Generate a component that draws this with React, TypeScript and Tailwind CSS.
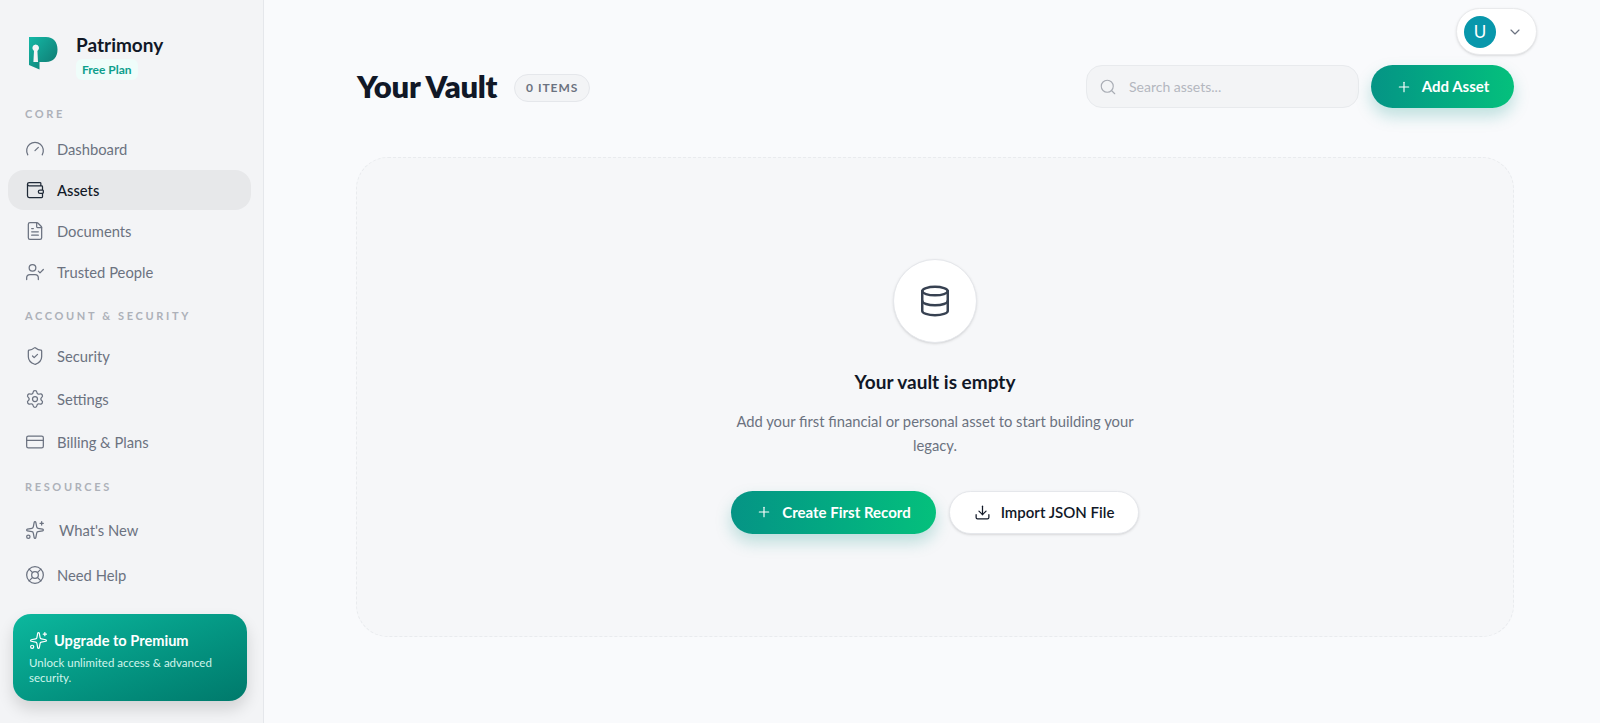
import React from 'react';
import {
  Gauge,
  Wallet,
  FileText,
  UserCheck,
  ShieldCheck,
  Settings,
  CreditCard,
  Sparkles,
  LifeBuoy,
  Plus,
  Search,
  ChevronDown,
  Database,
  Download,
} from 'lucide-react';

const font = { fontFamily: 'Lato, "Noto Sans", sans-serif' };

const Logo = () => (
  <svg width="29" height="33" viewBox="0 0 29 33" fill="none" className="shrink-0">
    <defs>
      <linearGradient id="logoFill" x1="0" y1="0" x2="1" y2="1">
        <stop offset="0%" stopColor="#14b8a6" />
        <stop offset="100%" stopColor="#0f766e" />
      </linearGradient>
    </defs>
    <path
      fillRule="evenodd"
      d="M0 0H17C24.5 0 28.5 5 28.5 12.5C28.5 20 24.5 25 17 25H10.5V32.5L0 28ZM6.7 7.6A3.4 3.4 0 0 0 5 13.9L4.4 25H9L8.4 13.9A3.4 3.4 0 0 0 6.7 7.6Z"
      fill="url(#logoFill)"
    />
  </svg>
);

const NavItem = ({
  icon: Icon,
  label,
  active,
  h,
  gap = 'gap-[12px]',
}: {
  icon: React.ElementType;
  label: string;
  active?: boolean;
  h: string;
  gap?: string;
}) => (
  <div
    className={`flex items-center ${gap} rounded-2xl pl-[17px] text-[14.75px] ${h} ${
      active ? 'bg-[#e7e8ea] text-[#111827] font-medium' : 'text-[#6b7280]'
    }`}
  >
    <Icon size={20} strokeWidth={1.5} className={active ? 'text-[#1f2937]' : 'text-[#6b7280]'} />
    <span>{label}</span>
  </div>
);

const SectionLabel = ({ children, className }: { children: string; className: string }) => (
  <div className={`pl-[25px] text-[11px] font-bold tracking-[0.24em] text-[#adb1b9] leading-4 ${className}`}>{children}</div>
);

const Sidebar = () => (
  <aside className="w-[264px] h-[723px] shrink-0 bg-[#f3f4f6] border-r border-[#e5e7eb] flex flex-col">
    <div className="flex gap-[18px] pl-[29px] pt-[37px]">
      <Logo />
      <div className="flex flex-col items-start">
        <span className="text-[19px] font-bold leading-[20px] text-[#111827] -mt-[2px]">Patrimony</span>
        <span className="mt-[4px] rounded-md bg-[#effdfa] px-[6px] text-[12px] font-bold leading-[21px] text-[#0d9f8c]">Free Plan</span>
      </div>
    </div>

    <SectionLabel className="mt-[26px]">CORE</SectionLabel>
    <nav className="mt-[7px] pl-[8px] pr-[12px] flex flex-col gap-[1px]">
      <NavItem icon={Gauge} label="Dashboard" h="h-[40px]" />
      <NavItem icon={Wallet} label="Assets" active h="h-[40px]" />
      <NavItem icon={FileText} label="Documents" h="h-[40px]" />
      <NavItem icon={UserCheck} label="Trusted People" h="h-[40px]" />
    </nav>

    <SectionLabel className="mt-[16px]">ACCOUNT &amp; SECURITY</SectionLabel>
    <nav className="mt-[11px] pl-[8px] pr-[12px] flex flex-col gap-[1px]">
      <NavItem icon={ShieldCheck} label="Security" h="h-[42px]" />
      <NavItem icon={Settings} label="Settings" h="h-[42px]" />
      <NavItem icon={CreditCard} label="Billing & Plans" h="h-[42px]" />
    </nav>

    <SectionLabel className="mt-[16px]">RESOURCES</SectionLabel>
    <nav className="mt-[13px] pl-[8px] pr-[12px] flex flex-col gap-[1px]">
      <NavItem icon={Sparkles} label="What's New" h="h-[44px]" gap="gap-[14px]" />
      <NavItem icon={LifeBuoy} label="Need Help" h="h-[44px]" />
    </nav>

    <div className="ml-[13px] mr-[16px] mt-[17px] h-[87px] rounded-[18px] bg-gradient-to-br from-[#0cb89e] to-[#00796b] pl-[16px] pr-[12px] pt-[17px] shadow-[0_8px_16px_rgba(0,0,0,0.14)]">
      <div className="flex items-center gap-[6px] text-white">
        <Sparkles size={19} strokeWidth={1.5} />
        <span className="text-[14.6px] font-bold leading-[18px]">Upgrade to Premium</span>
      </div>
      <p className="mt-[6px] text-[11.5px] leading-[14.5px] text-[#d1f5ec]">Unlock unlimited access &amp; advanced security.</p>
    </div>
  </aside>
);

const GreenButton = ({ label, className }: { label: string; className: string }) => (
  <button className={`flex items-center justify-center gap-[10px] rounded-full bg-gradient-to-r from-[#059485] to-[#05c07c] text-[15px] font-bold text-white shadow-[0_8px_16px_rgba(13,148,136,0.25)] ${className}`}>
    <Plus size={16} strokeWidth={1.75} />
    {label}
  </button>
);

const App = () => (
  <div style={font} className="relative flex h-[723px] w-[1600px] overflow-hidden bg-[#f9fafc]">
    <Sidebar />

    <main className="flex-1 pl-[92px] pr-[86px] pt-[65px]">
      <div className="flex h-[43px] items-center justify-between">
        <div className="flex items-center gap-[17px]">
          <h1 className="text-[31px] font-extrabold leading-none tracking-[-0.01em] text-[#111827] ml-[1px]">Your Vault</h1>
          <span className="flex h-[28px] w-[76px] items-center justify-center rounded-full border border-[#e5e7eb] bg-[#f3f4f6] text-[12px] font-bold tracking-[0.08em] text-[#6b7280] mt-[2px]">0 ITEMS</span>
        </div>
        <div className="flex items-center gap-[12px]">
          <div className="flex h-[43px] w-[273px] items-center gap-[12px] rounded-2xl border border-[#e8eaed] bg-[#f3f4f6] pl-[12px] text-[14px] text-[#b3b7bf]">
            <Search size={18} strokeWidth={1.5} className="text-[#a8acb4]" />
            <span>Search assets...</span>
          </div>
          <GreenButton label="Add Asset" className="h-[43px] w-[143px]" />
        </div>
      </div>

      <section className="mt-[49px] flex h-[480px] flex-col items-center rounded-[32px] border border-dashed border-[#e9ebee] bg-[#f6f7f9] pt-[101px]">
        <div className="flex h-[84px] w-[84px] items-center justify-center rounded-full border border-[#e5e7eb] bg-white shadow-sm">
          <Database size={34} strokeWidth={1.75} className="text-[#374151]" />
        </div>
        <h2 className="mt-[26px] text-[19px] font-bold leading-[26px] text-[#111827]">Your vault is empty</h2>
        <p className="mt-[14px] w-[420px] text-center text-[14.75px] leading-[24.4px] text-[#6b7280]">Add your first financial or personal asset to start building your legacy.</p>
        <div className="mt-[33px] flex gap-[13px]">
          <GreenButton label="Create First Record" className="h-[43px] w-[205px]" />
          <button className="flex h-[43px] w-[190px] items-center justify-center gap-[10px] rounded-full border border-[#e5e7eb] bg-white text-[15px] font-semibold text-[#111827] shadow-sm">
            <Download size={17} strokeWidth={1.75} />
            Import JSON File
          </button>
        </div>
      </section>
    </main>

    {/* user menu sits over the page */}
    <div className="absolute right-[63px] top-[8px] flex h-[47px] w-[81px] items-center gap-[11px] rounded-full border border-[#e9eaec] bg-white pl-[7px] shadow-sm">
      <div className="flex h-[32px] w-[32px] items-center justify-center rounded-full bg-[#0897ab] text-[17px] text-white">U</div>
      <ChevronDown size={16} strokeWidth={1.75} className="text-[#6b7280]" />
    </div>
  </div>
);

export default App;
